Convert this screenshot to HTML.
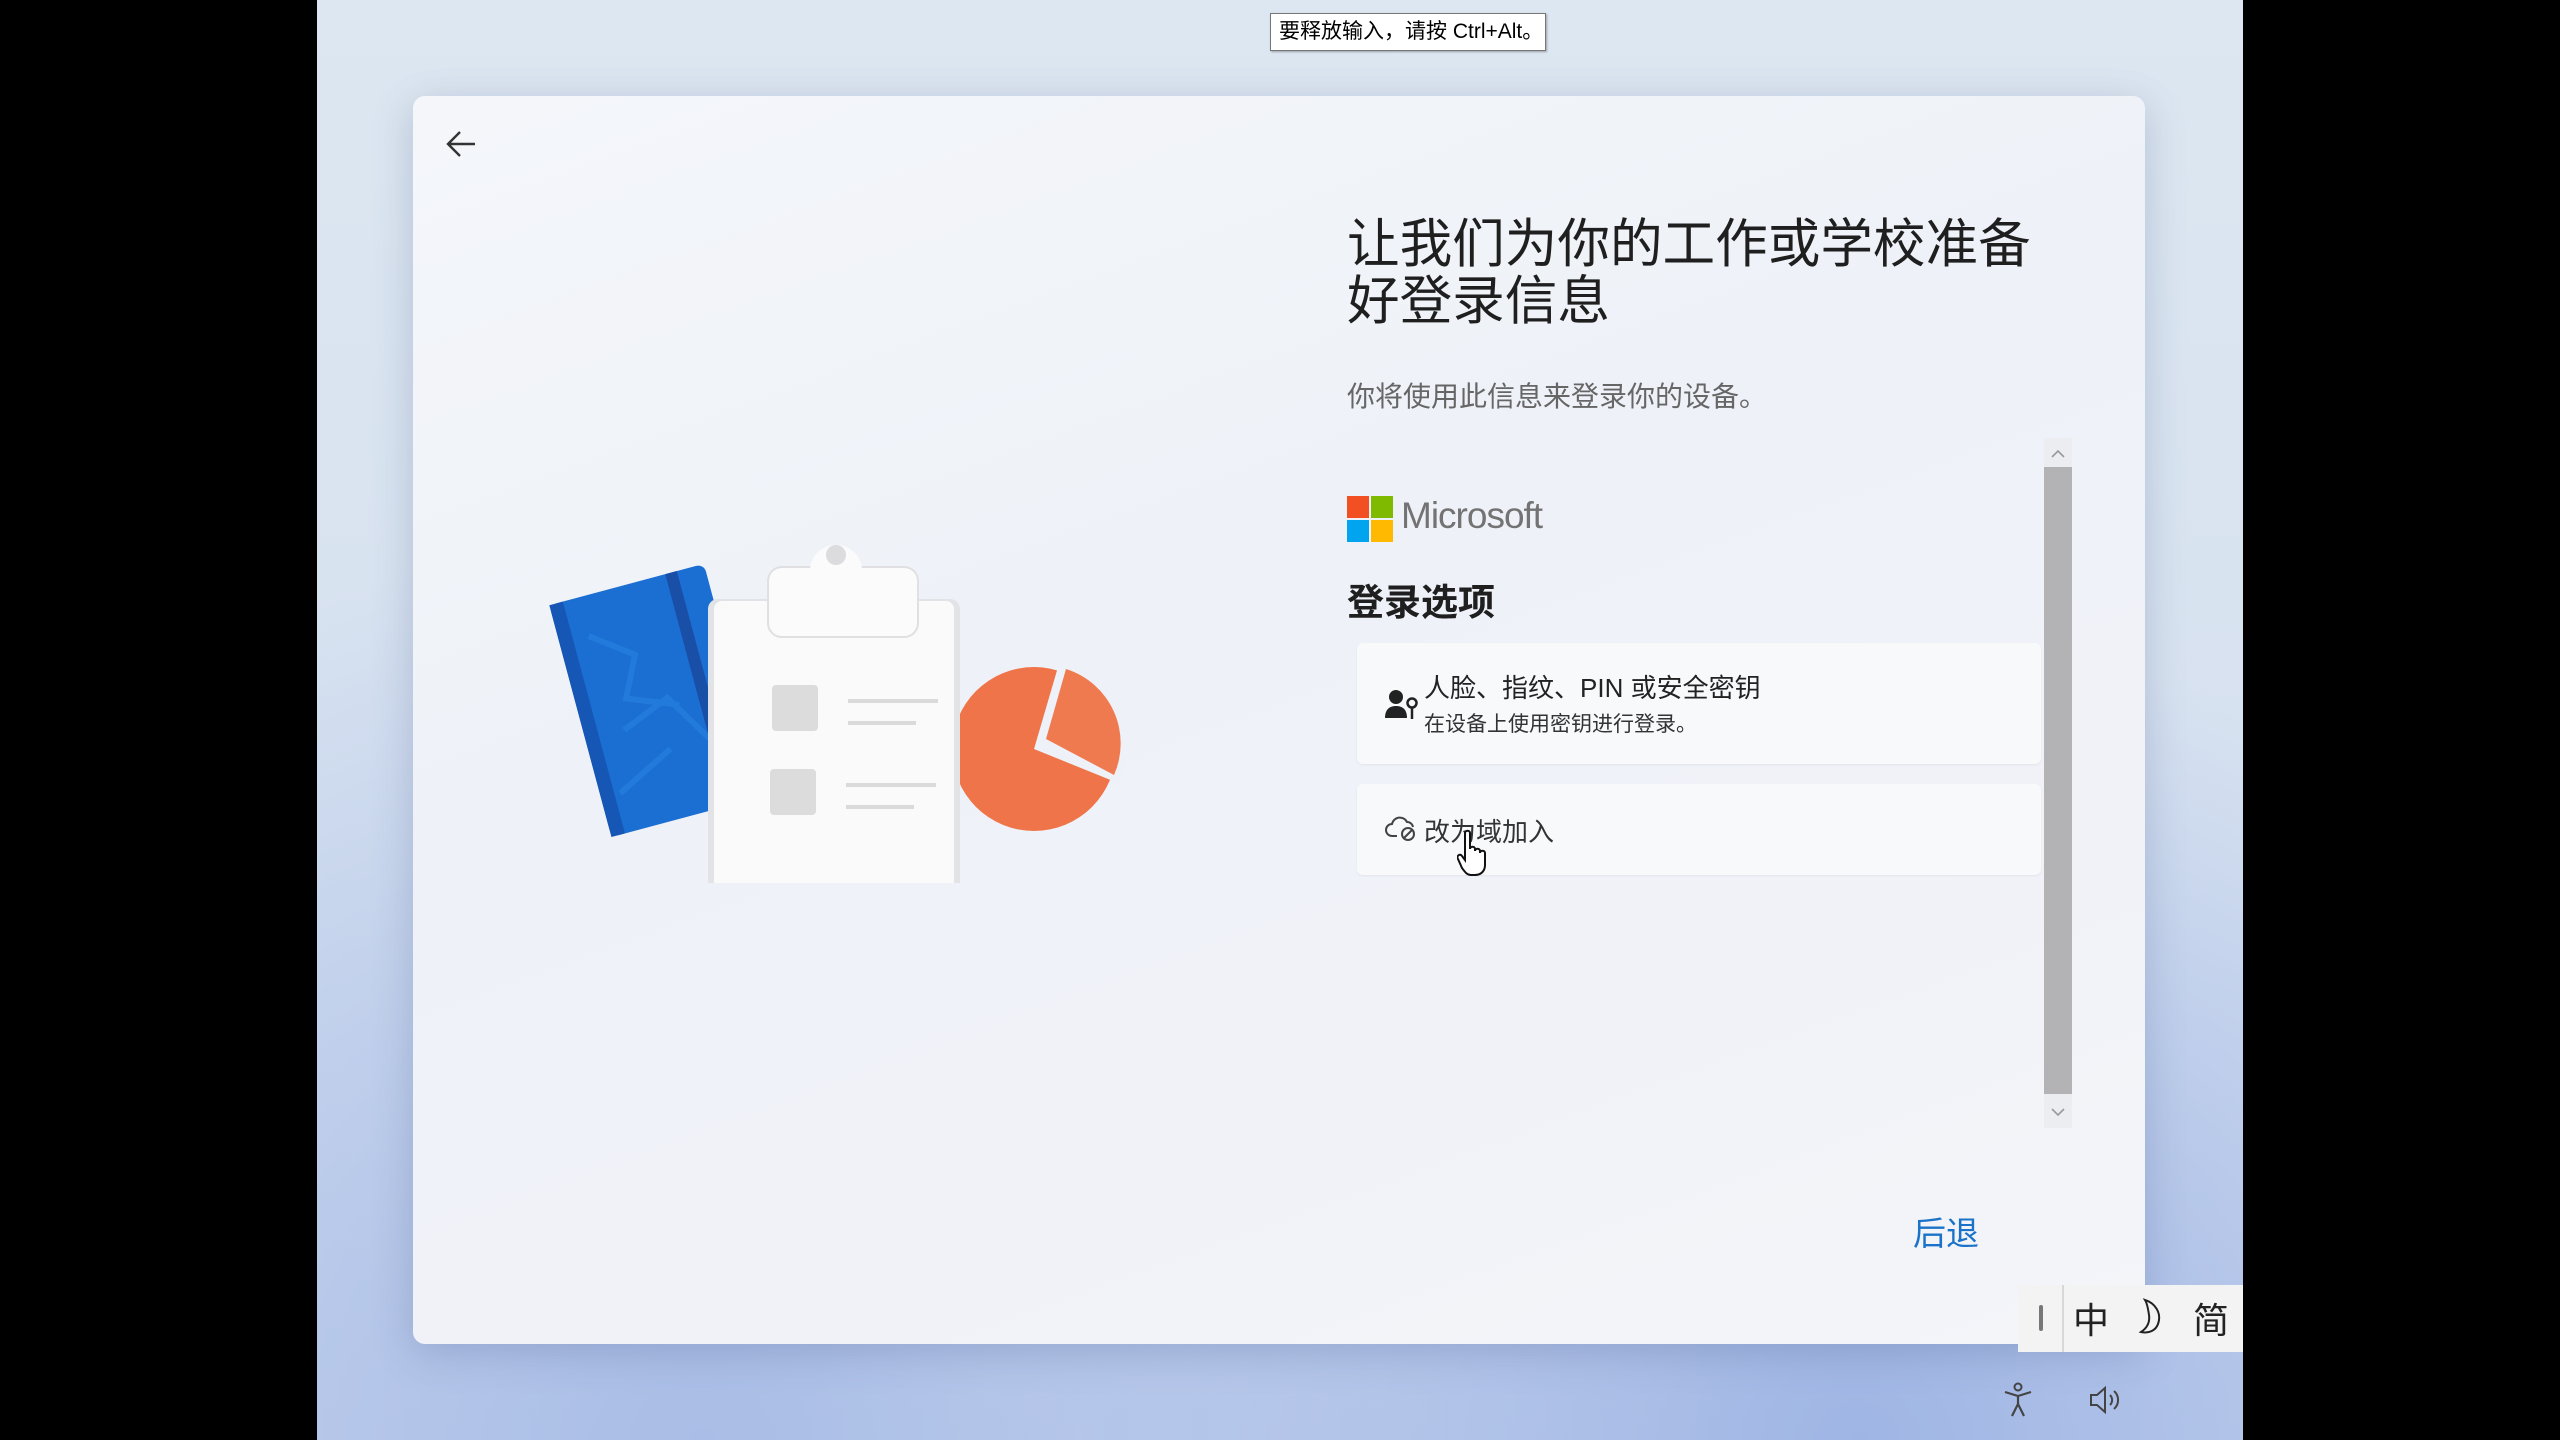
<!DOCTYPE html>
<html><head><meta charset="utf-8"><style>
*{margin:0;padding:0;box-sizing:border-box}
html,body{width:2560px;height:1440px;overflow:hidden;background:#000;font-family:"Liberation Sans","Noto Sans CJK SC",sans-serif}
#desk{position:absolute;left:317px;top:0;width:1926px;height:1440px;background:radial-gradient(ellipse at 20% 100%,#a9bde6 0%,rgba(169,189,230,0) 45%),radial-gradient(ellipse at 80% 100%,#9fb5e4 0%,rgba(159,181,228,0) 40%),linear-gradient(180deg,#dde7f1 0%,#d6e1f0 60%,#c9d6ee 100%);overflow:hidden}
#card{position:absolute;left:96px;top:96px;width:1732px;height:1248px;border-radius:12px;background:linear-gradient(160deg,#f4f6fa 0%,#eef2f8 40%,#f0f2f8 70%,#f4f5f9 100%);box-shadow:0 8px 40px rgba(60,80,130,.25)}
.a{position:absolute;white-space:nowrap}
#title{left:934px;top:120px;font-size:52.6px;line-height:57px;color:#1f1f1f}
#sub{left:934px;top:279px;font-size:28px;color:#666}
.opt{position:absolute;left:944px;width:684px;background:#f8f9fb;border-radius:6px;box-shadow:0 1px 2px rgba(0,0,0,.06)}
</style></head><body>
<div id="desk">
<div id="card">
 <svg class="a" style="left:28px;top:28px" width="40" height="40" viewBox="0 0 40 40"><path d="M34 20H7M19 8L7 20l12 12" fill="none" stroke="#333" stroke-width="2.4"/></svg>
 <svg class="a" style="left:105px;top:367px" width="720" height="420" viewBox="0 0 720 420">
  <g transform="rotate(-15 130 240)">
   <rect x="60" y="120" width="160" height="240" rx="8" fill="#1b6fd2"/>
   <rect x="60" y="120" width="14" height="240" fill="#1656b4"/>
   <rect x="180" y="120" width="12" height="240" fill="#1a4fa8"/>
   <path d="M90 160l40 30-20 40 50 20M100 260l50-20 30 50M80 320l60-30" stroke="#2a86e2" stroke-width="6" fill="none" opacity=".5"/>
  </g>
  <circle cx="516" cy="286" r="82" fill="#ef7449"/>
  <path d="M516 286L540 204 A84 84 0 0 1 600 320 Z" fill="#eef2f8"/>
  <path d="M528 276L548 206 A78 78 0 0 1 596 312 Z" fill="#f07a50"/>
  <rect x="190" y="136" width="252" height="306" rx="10" fill="#e2e3e6"/>
  <rect x="196" y="138" width="240" height="294" rx="8" fill="#fafafa"/>
  <rect x="250" y="104" width="150" height="70" rx="14" fill="#fbfbfc" stroke="#e0e0e3" stroke-width="2"/>
  <path d="M292 108a26 26 0 0 1 52 0z" fill="#fbfbfc"/>
  <circle cx="318" cy="92" r="10" fill="#dcdcdf"/>
  <rect x="254" y="222" width="46" height="46" rx="4" fill="#dcdcdc"/>
  <rect x="330" y="236" width="90" height="4" fill="#dadada"/><rect x="330" y="258" width="68" height="4" fill="#dadada"/>
  <rect x="252" y="306" width="46" height="46" rx="4" fill="#dcdcdc"/>
  <rect x="328" y="320" width="90" height="4" fill="#dadada"/><rect x="328" y="342" width="68" height="4" fill="#dadada"/>
 </svg>
 <div class="a" id="title">让我们为你的工作或学校准备<br>好登录信息</div>
 <div class="a" id="sub">你将使用此信息来登录你的设备。</div>
 <svg class="a" style="left:1630px;top:342px" width="30" height="690"><rect x="1" y="0" width="28" height="690" fill="#ebedf1"/><rect x="1" y="29" width="28" height="627" fill="#b3b3b5"/><path d="M9 19l6-6 6 6M9 671l6 6 6-6" stroke="#9a9a9a" stroke-width="1.6" fill="none"/></svg>
 <svg class="a" style="left:934px;top:400px" width="46" height="46"><rect width="22" height="22" fill="#f25022"/><rect x="24" width="22" height="22" fill="#7fba00"/><rect y="24" width="22" height="22" fill="#00a4ef"/><rect x="24" y="24" width="22" height="22" fill="#ffb900"/></svg>
 <div class="a" style="left:988px;top:399px;font-size:37px;color:#737373;letter-spacing:-1px">Microsoft</div>
 <div class="a" style="left:934px;top:476px;font-size:37px;font-weight:bold;color:#1f1f1f">登录选项</div>
 <div class="opt" style="top:547px;height:121px"></div>
 <svg class="a" style="left:972px;top:592px" width="34" height="34" viewBox="0 0 34 34"><circle cx="11" cy="9" r="7" fill="#222"/><path d="M0 30c0-9 5-12 11-12s11 3 11 12z" fill="#222"/><circle cx="27" cy="15" r="4.5" fill="none" stroke="#222" stroke-width="2.5"/><path d="M27 19v12" stroke="#222" stroke-width="2.5"/></svg>
 <div class="a" style="left:1011px;top:572px;font-size:26px;color:#222">人脸、指纹、PIN 或安全密钥</div>
 <div class="a" style="left:1011px;top:612px;font-size:21px;color:#333">在设备上使用密钥进行登录。</div>
 <div class="opt" style="top:688px;height:91px"></div>
 <svg class="a" style="left:972px;top:720px" width="32" height="26" viewBox="0 0 32 26"><path d="M12 20H7a6 6 0 0 1 0-12 8 8 0 0 1 15-2 6 6 0 0 1 6 5" fill="none" stroke="#444" stroke-width="2"/><circle cx="23" cy="18" r="6" fill="none" stroke="#444" stroke-width="2"/><path d="M19 22l8-8" stroke="#444" stroke-width="2"/></svg>
 <div class="a" style="left:1011px;top:716px;font-size:26px;color:#333">改为域加入</div>
 <svg class="a" style="left:1044px;top:733px" width="34" height="48" viewBox="0 0 34 48"><path d="M8 4c0-3 5-3 5 0v16c0-3 5-3 5 0v2c0-3 5-3 5 0v2c0-3 5-3 5 0v12c0 6-4 10-10 10h-4c-4 0-6-3-9-7L1 30c-2-3 2-6 4-3l3 4z" fill="#fff" stroke="#111" stroke-width="2"/></svg>
 <div class="a" style="left:1500px;top:1111px;font-size:33px;color:#1a73c8">后退</div>
</div>
<div class="a" style="left:1701px;top:1285px;width:225px;height:67px;background:#f3f3f3"></div>
<div class="a" style="left:1722px;top:1305px;width:4px;height:26px;background:#777;border-radius:2px"></div>
<div class="a" style="left:1745px;top:1285px;width:2px;height:67px;background:#d8d8d8"></div>
<div class="a" style="left:1756px;top:1292px;font-size:36px;color:#222">中</div>
<svg class="a" style="left:1820px;top:1298px" width="30" height="38" viewBox="0 0 30 38"><path d="M8 2c10 3 17 13 13 24-2 6-9 10-17 8 6-4 9-10 8-17C11 10 10 5 8 2z" fill="none" stroke="#222" stroke-width="2"/></svg>
<div class="a" style="left:1876px;top:1292px;font-size:36px;color:#222">简</div>
<svg class="a" style="left:1685px;top:1382px" width="32" height="36" viewBox="0 0 32 36"><circle cx="16" cy="5" r="3.5" fill="none" stroke="#444" stroke-width="2"/><path d="M3 10l13 4 13-4M16 14v8l-6 12M16 22l6 12" fill="none" stroke="#444" stroke-width="2.2"/></svg>
<svg class="a" style="left:1771px;top:1384px" width="36" height="32" viewBox="0 0 36 32"><path d="M3 11h6l8-7v24l-8-7H3z" fill="none" stroke="#444" stroke-width="2"/><path d="M22 11a7 7 0 0 1 0 10M26 7a12 12 0 0 1 0 18" fill="none" stroke="#444" stroke-width="2"/></svg>
<div class="a" style="left:953px;top:13px;width:276px;height:38px;background:#fff;border:1px solid #777;font-size:21px;line-height:36px;padding-left:8px;color:#000;box-shadow:1px 1px 2px rgba(0,0,0,.3)">要释放输入，请按 Ctrl+Alt。</div>
</div>
</body></html>
